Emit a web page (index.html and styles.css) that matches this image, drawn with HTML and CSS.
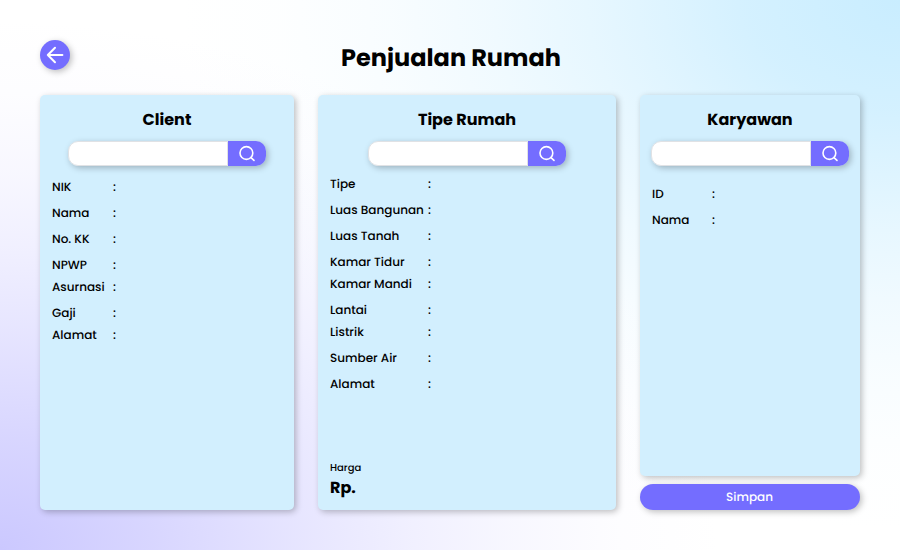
FILE: index.html
```html
<!DOCTYPE html>
<html lang="id">
<head>
<meta charset="utf-8">
<title>Penjualan Rumah</title>
<link rel="stylesheet" href="styles.css">
</head>
<body>
<svg class="sprite" aria-hidden="true">
  <symbol id="search" viewBox="0 0 20 20">
    <circle cx="9.4" cy="9" r="6.4"/>
    <path d="M14 13.6l3 2.8"/>
  </symbol>
</svg>
<header class="top">
  <button class="back" aria-label="Kembali">
    <svg viewBox="0 0 30 30"><path d="M22.4 15H7.8M15 7.8L7.8 15l7.2 7.2"/></svg>
  </button>
  <h1 class="title">Penjualan Rumah</h1>
</header>
<main class="columns">
  <section class="card">
    <h2 class="heading">Client</h2>
    <div class="search"><input class="field" aria-label="Cari client"><button class="find" aria-label="Cari"><svg><use href="#search"/></svg></button></div>
    <dl class="rows narrow">
      <div class="row"><dt>NIK</dt><dd>:</dd></div>
      <div class="row"><dt>Nama</dt><dd>:</dd></div>
      <div class="row"><dt>No. KK</dt><dd>:</dd></div>
      <div class="row tight"><dt>NPWP</dt><dd>:</dd></div>
      <div class="row"><dt>Asurnasi</dt><dd>:</dd></div>
      <div class="row tight"><dt>Gaji</dt><dd>:</dd></div>
      <div class="row"><dt>Alamat</dt><dd>:</dd></div>
    </dl>
  </section>
  <section class="card">
    <h2 class="heading">Tipe Rumah</h2>
    <div class="search"><input class="field" aria-label="Cari tipe rumah"><button class="find" aria-label="Cari"><svg><use href="#search"/></svg></button></div>
    <dl class="rows wide">
      <div class="row"><dt>Tipe</dt><dd>:</dd></div>
      <div class="row"><dt>Luas Bangunan</dt><dd>:</dd></div>
      <div class="row"><dt>Luas Tanah</dt><dd>:</dd></div>
      <div class="row tight"><dt>Kamar Tidur</dt><dd>:</dd></div>
      <div class="row"><dt>Kamar Mandi</dt><dd>:</dd></div>
      <div class="row tight"><dt>Lantai</dt><dd>:</dd></div>
      <div class="row"><dt>Listrik</dt><dd>:</dd></div>
      <div class="row"><dt>Sumber Air</dt><dd>:</dd></div>
      <div class="row"><dt>Alamat</dt><dd>:</dd></div>
    </dl>
    <div class="price">
      <span class="price-label">Harga</span>
      <strong class="price-value">Rp.</strong>
    </div>
  </section>
  <div class="side">
    <section class="card">
      <h2 class="heading">Karyawan</h2>
      <div class="search"><input class="field" aria-label="Cari karyawan"><button class="find" aria-label="Cari"><svg><use href="#search"/></svg></button></div>
      <dl class="rows staff">
        <div class="row"><dt>ID</dt><dd>:</dd></div>
        <div class="row"><dt>Nama</dt><dd>:</dd></div>
      </dl>
    </section>
    <button class="save"><span class="save-label">Simpan</span></button>
  </div>
</main>
</body>
</html>
```
FILE: styles.css
```css
* { box-sizing: border-box; }

body {
  margin: 0;
  width: 900px;
  height: 550px;
  padding: 40px;
  overflow: hidden;
  display: flex;
  flex-direction: column;
  font-family: Poppins, Inter, "Open Sans", sans-serif;
  font-size: 12px;
  font-weight: 500;
  text-rendering: geometricPrecision;
  color: #000;
  background:
    radial-gradient(720px 530px at 100% 0, rgba(201, 237, 255, 1) 0%, rgba(201, 237, 255, 0.8) 21%, rgba(201, 237, 255, 0.45) 43%, rgba(201, 237, 255, 0.27) 57%, rgba(201, 237, 255, 0.13) 71%, rgba(201, 237, 255, 0.04) 86%, rgba(201, 237, 255, 0) 100%),
    radial-gradient(720px 530px at 0 100%, rgba(203, 200, 255, 1) 0%, rgba(203, 200, 255, 0.75) 21%, rgba(203, 200, 255, 0.45) 43%, rgba(203, 200, 255, 0.28) 57%, rgba(203, 200, 255, 0.14) 71%, rgba(203, 200, 255, 0.04) 86%, rgba(203, 200, 255, 0) 100%),
    #fff;
}

button { border: 0; padding: 0; font: inherit; color: #fff; background: #746dff; }
svg { display: block; fill: none; stroke: #fff; }
.sprite { display: none; }

.top {
  display: grid;
  grid-template-columns: 30px 1fr 28px;
  height: 55px;
  flex: none;
}

.back {
  width: 30px;
  height: 30px;
  border-radius: 50%;
  box-shadow: 2px 2px 6px rgba(0, 0, 0, 0.25);
}
.back svg { width: 30px; height: 30px; stroke-width: 2; stroke-linecap: round; stroke-linejoin: round; }

.title { margin: 0; text-align: center; font-size: 24px; line-height: 38px; font-weight: 700; }

.columns {
  display: grid;
  grid-template-columns: 254px 298px 220px;
  gap: 24px;
  height: 415px;
}

.card {
  display: flex;
  flex-direction: column;
  padding: 12px;
  border-radius: 5px;
  background: #d2effe;
  box-shadow: 2px 2px 6px rgba(0, 0, 0, 0.25);
}

.heading { margin: 0; text-align: center; font-size: 16px; line-height: 26px; font-weight: 700; }

.search {
  display: flex;
  flex: none;
  align-self: center;
  width: 198px;
  height: 25px;
  margin: 8px -2px 0;
  border-radius: 10px;
  box-shadow: 2px 2px 6px rgba(0, 0, 0, 0.25);
}
.field {
  width: 160px;
  border: 1px solid #e0e2e5;
  border-radius: 10px 0 0 10px;
  background: #fff;
  outline: 0;
}
.find {
  display: flex;
  justify-content: center;
  align-items: center;
  width: 38px;
  border-radius: 0 10px 10px 0;
}
.find svg { width: 20px; height: 20px; stroke-width: 1.6; stroke-linecap: round; }

.rows { margin: 12px 0 0; line-height: 20px; }
.wide { margin-top: 9px; }
.staff { margin-top: 19px; }
.row { display: flex; height: 26px; white-space: nowrap; }
.tight { height: 22px; }
dt { width: 61px; }
.wide dt { width: 98px; }
.staff dt { width: 60px; }
dd { margin: 0; }

/* A minute rotation turns off glyph hinting, so small letters keep their true shapes. */
dt, dd, .save-label, .price-label { transform: rotate(0.05deg); }

.price { display: flex; flex-direction: column; margin-top: auto; }
.price-label { font-size: 10px; line-height: 15px; }
.price-value { font-size: 16px; line-height: 24px; font-weight: 700; margin-bottom: -1px; padding-top: 1px; margin-bottom: -2px; }

.side { display: flex; flex-direction: column; gap: 8px; }
.side .card { flex: 1; }
.save { height: 26px; padding-right: 1px; border-radius: 13px; font-size: 12px; box-shadow: 2px 2px 6px rgba(0, 0, 0, 0.25); }
.save-label { display: inline-block; }
```
